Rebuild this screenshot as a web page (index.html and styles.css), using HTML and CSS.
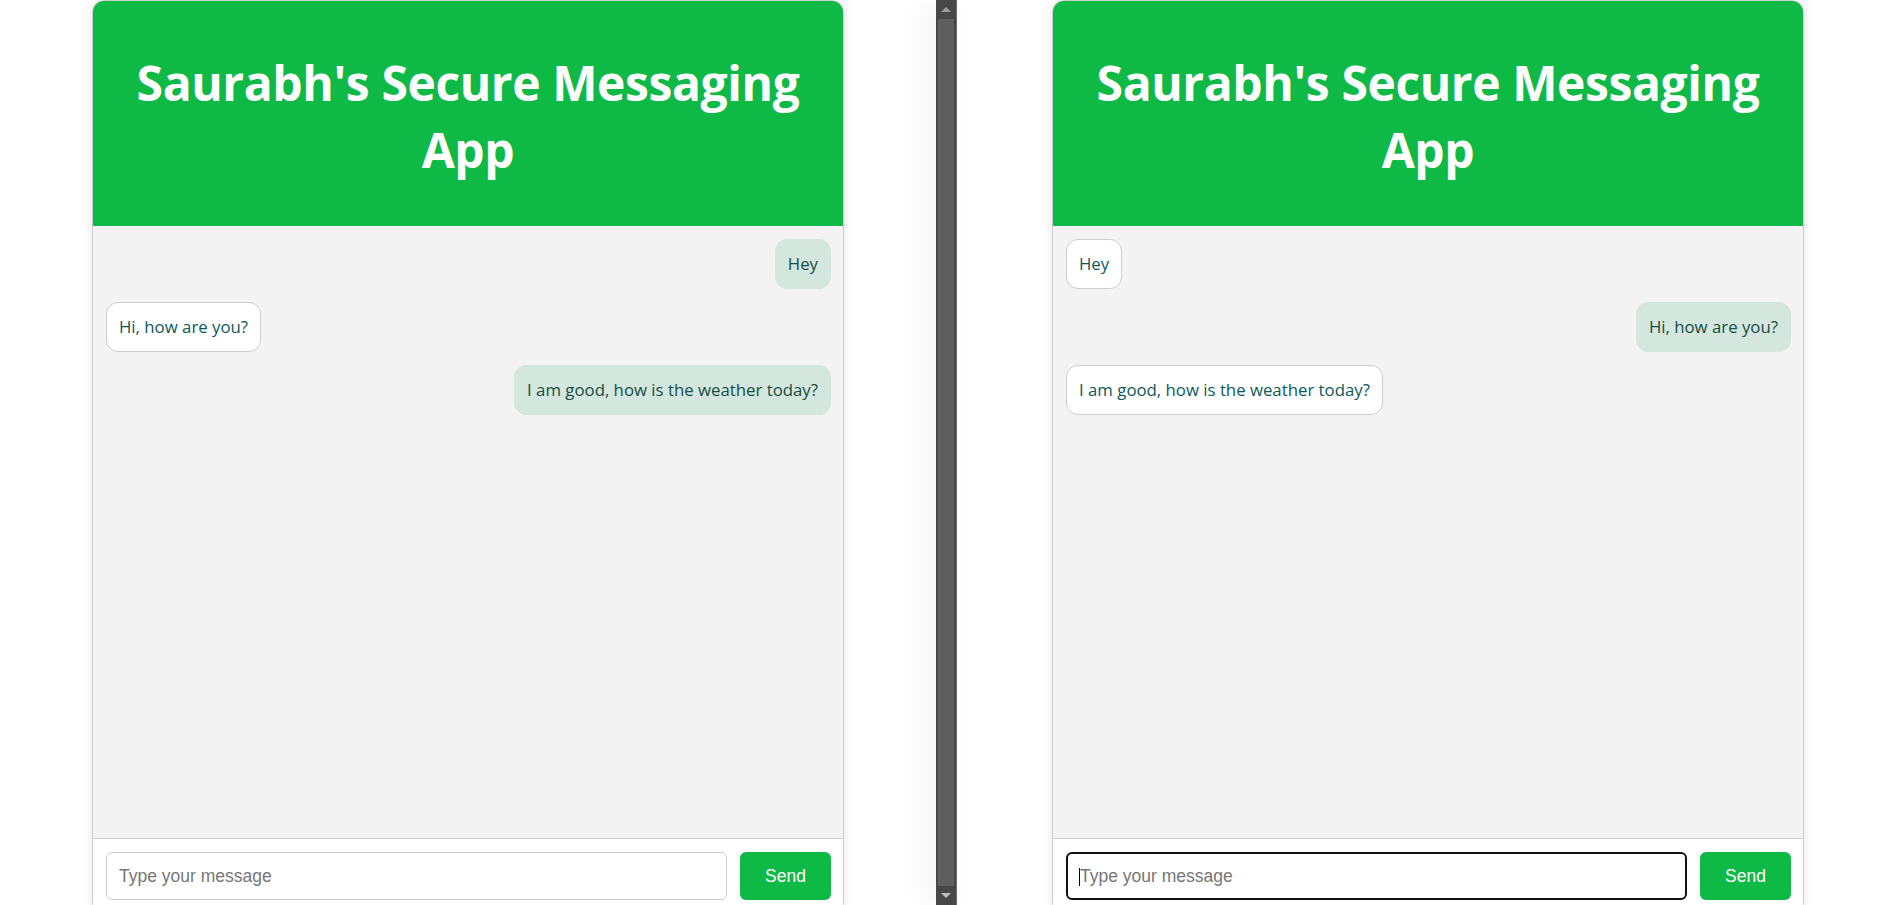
FILE: index.html
```html
<!DOCTYPE html>
<html lang="en">
<head>
<meta charset="utf-8">
<title>Saurabh's Secure Messaging App</title>
<link rel="stylesheet" href="styles.css">
</head>
<body>
<div class="split">
  <div class="pane pane-left">
    <div class="card">
      <header class="card-header">
        <h1 class="title">Saurabh's Secure Messaging App</h1>
      </header>
      <div class="messages">
        <div class="msg sent">Hey</div>
        <div class="msg recv">Hi, how are you?</div>
        <div class="msg sent">I am good, how is the weather today?</div>
      </div>
      <div class="composer">
        <span class="input-wrap"><input class="msg-input" type="text" placeholder="Type your message"></span>
        <button class="send-btn" type="button">Send</button>
      </div>
    </div>
  </div>
  <div class="splitter">
    <span class="arrow arrow-up"></span>
    <span class="track"></span>
    <span class="arrow arrow-down"></span>
  </div>
  <div class="pane pane-right">
    <div class="card">
      <header class="card-header">
        <h1 class="title">Saurabh's Secure Messaging App</h1>
      </header>
      <div class="messages">
        <div class="msg recv">Hey</div>
        <div class="msg sent">Hi, how are you?</div>
        <div class="msg recv">I am good, how is the weather today?</div>
      </div>
      <div class="composer">
        <span class="input-wrap focused"><input class="msg-input" type="text" placeholder="Type your message"></span>
        <button class="send-btn" type="button">Send</button>
      </div>
    </div>
  </div>
</div>
</body>
</html>
```
FILE: styles.css
```css
html, body {
  margin: 0;
  padding: 0;
  height: 100%;
  overflow: hidden;
  background: #ffffff;
}

.split {
  display: flex;
  height: 905px;
  font-family: "Open Sans", "Noto Sans", sans-serif;
}

.pane {
  display: flex;
  justify-content: center;
  align-items: flex-start;
}

.pane-left {
  width: 936px;
  flex-shrink: 0;
}

.pane-right {
  flex: 1;
  padding-left: 4px;
}

.card {
  box-sizing: border-box;
  width: 752px;
  height: 914px;
  flex-shrink: 0;
  border: 1px solid #cfcfcf;
  border-radius: 12px;
  box-shadow: 0 0 12px rgba(0, 0, 0, 0.1);
  background: #fff;
  display: flex;
  flex-direction: column;
  overflow: hidden;
}

.card-header {
  background: #0fb946;
  color: #fff;
  text-align: center;
  padding: 48px 25px 43px;
}

.title {
  margin: 0;
  font-size: 48px;
  line-height: 67px;
  font-weight: 700;
  letter-spacing: -0.4px;
}

.messages {
  flex: 1;
  background: #f3f3f3;
  padding: 13px 12px 12px 13px;
  display: flex;
  flex-direction: column;
  align-items: flex-start;
  gap: 13px;
}

.msg {
  padding: 12px 12px;
  border-radius: 12px;
  font-size: 16.8px;
  line-height: 24px;
  color: #0b5a58;
  border: 1px solid transparent;
}

.msg.sent {
  align-self: flex-end;
  background: #d3e7de;
  border-color: #d3e7de;
  color: #174d42;
}

.msg.recv {
  background: #fff;
  border-color: #cdcdcd;
}

.composer {
  border-top: 1px solid #cfcfcf;
  background: #fff;
  padding: 13px 12px 13px 13px;
  display: flex;
  gap: 13px;
}

.input-wrap {
  flex: 1;
  position: relative;
  display: flex;
}

.msg-input {
  flex: 1;
  box-sizing: border-box;
  height: 48px;
  border: 1px solid #cccccc;
  border-radius: 6px;
  padding: 0 12px;
  font-family: "Liberation Sans", Arial, sans-serif;
  font-size: 17.5px;
  color: #222;
  background: #fff;
  outline: none;
}

.msg-input::placeholder {
  color: #767676;
}

.focused .msg-input {
  border: 2px solid #111;
  padding-left: 12px;
}

.focused::after {
  content: "";
  position: absolute;
  left: 13px;
  top: 16px;
  width: 1px;
  height: 18px;
  background: #000;
}

.send-btn {
  box-sizing: border-box;
  height: 48px;
  width: 91px;
  border: none;
  border-radius: 6px;
  background: #0fb946;
  color: #fff;
  font-family: "Liberation Sans", Arial, sans-serif;
  font-size: 17.5px;
  padding: 0;
}

.splitter {
  width: 21px;
  flex-shrink: 0;
  background: #474747;
  display: flex;
  flex-direction: column;
  align-items: center;
  box-shadow: -10px 0 28px rgba(0, 0, 0, 0.06);
  border-right: 1px solid #6a6a6a;
  box-sizing: border-box;
}

.track {
  flex: 1;
  width: 16px;
  background: #5f5f5f;
}

.arrow {
  height: 19px;
  width: 16px;
  display: flex;
  align-items: center;
  justify-content: center;
  position: relative;
}

.arrow-up::before {
  content: "";
  border-left: 5px solid transparent;
  border-right: 5px solid transparent;
  border-bottom: 5px solid #9c9c9c;
}

.arrow-down::before {
  content: "";
  border-left: 5px solid transparent;
  border-right: 5px solid transparent;
  border-top: 5px solid #bdbdbd;
}
```
